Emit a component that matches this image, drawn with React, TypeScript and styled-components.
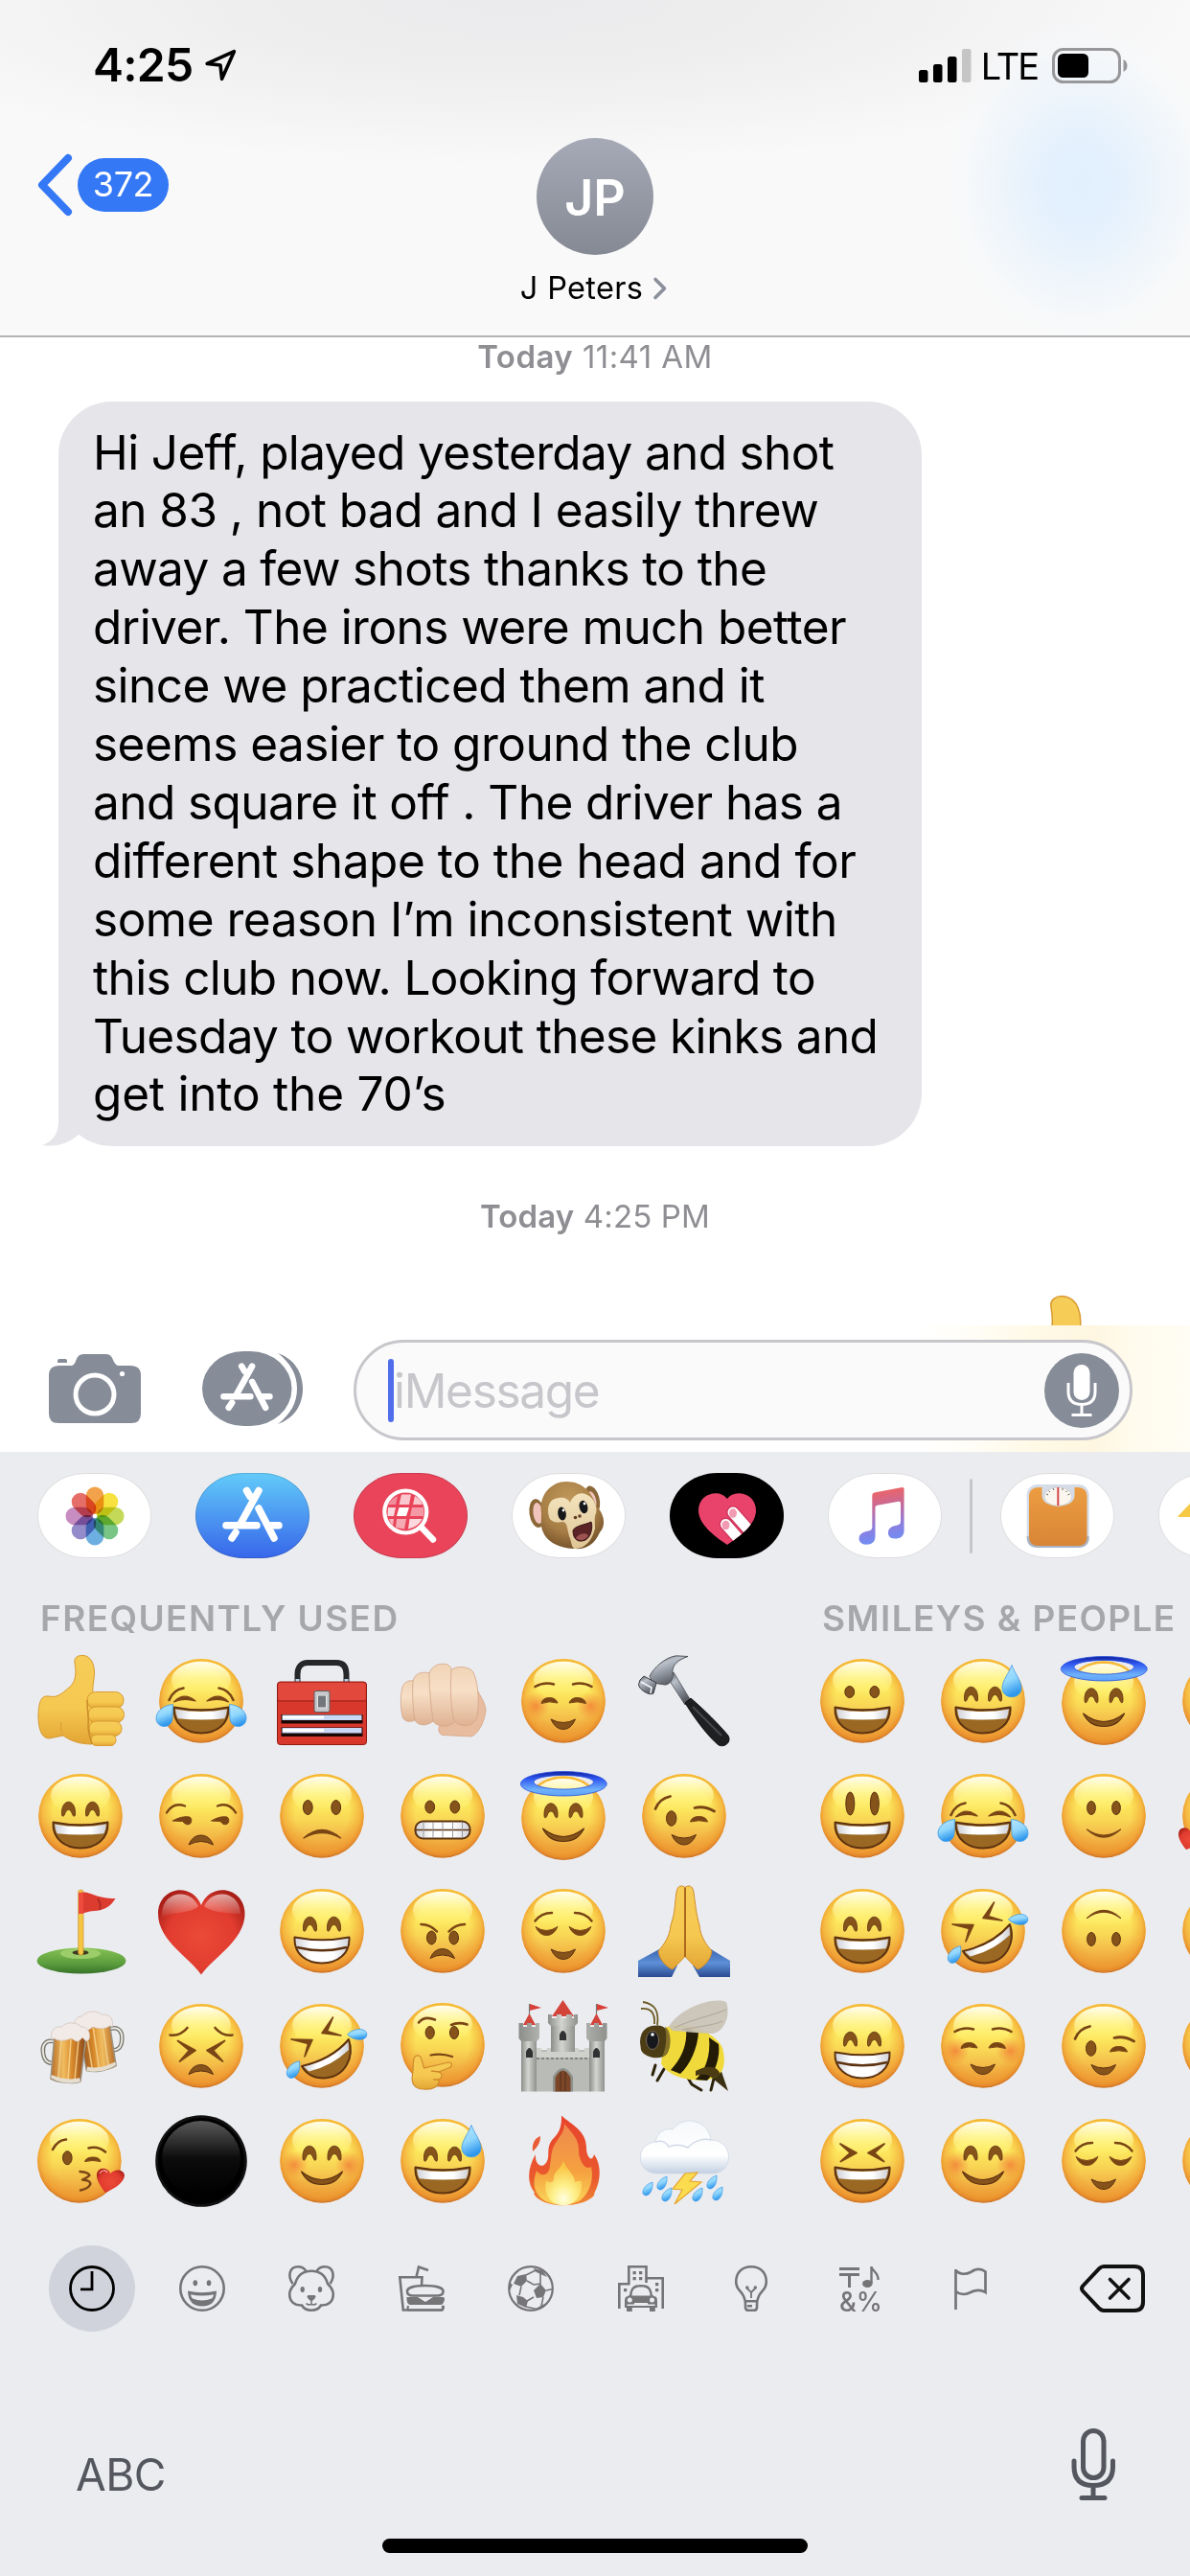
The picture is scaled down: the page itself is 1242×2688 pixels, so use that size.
import React from 'react';
import styled, { createGlobalStyle } from 'styled-components';

const GlobalStyle = createGlobalStyle`
  * { box-sizing: border-box; }
  body {
    margin: 0;
    background: #fff;
    font-family: Inter, "Liberation Sans", sans-serif;
    color: #000;
  }
  svg { display: block; flex-shrink: 0; overflow: visible; }
`;

const Screen = styled.div`
  width: 1242px;
  height: 2688px;
  display: flex;
  flex-direction: column;
  overflow: hidden;
`;

/* ---------- header ---------- */

const Header = styled.header`
  height: 352px;
  flex-shrink: 0;
  display: flex;
  flex-direction: column;
  border-bottom: 2px solid #b4b4b6;
  background:
    radial-gradient(ellipse 150px 175px at 1128px 192px, #e1effd 0%, #e5f1fd 30%, rgba(236, 244, 251, 0.75) 60%, rgba(246, 249, 252, 0.3) 85%, rgba(249, 249, 249, 0) 100%),
    radial-gradient(ellipse 720px 175px at 540px 0, #ebebed 0%, #ededee 35%, #f4f4f5 75%, rgba(249, 249, 249, 0) 100%),
    #f9f9f9;
`;

const StatusBar = styled.div`
  height: 136px;
  padding: 0 65px 0 97px;
  display: flex;
  align-items: center;
  justify-content: space-between;
`;

const StatusGroup = styled.div<{ $gap: number }>`
  display: flex;
  align-items: center;
  gap: ${({ $gap }) => $gap}px;
`;

const Time = styled.span`
  font-size: 48px;
  font-weight: 600;
  letter-spacing: -0.7px;
  line-height: 60px;
`;

const Carrier = styled.span`
  margin-left: -5px;
  padding-top: 2px;
  font-size: 38px;
  letter-spacing: -2px;
  line-height: 60px;
`;

const NavRow = styled.div`
  flex: 1;
  display: grid;
  grid-template-columns: 1fr auto 1fr;
  padding: 8px 39px 0;
`;

const BackButton = styled.div`
  display: flex;
  align-items: center;
  gap: 6px;
  height: 64px;
  margin-top: 17px;
`;

const UnreadBadge = styled.span`
  width: 95px;
  height: 56px;
  border-radius: 28px;
  background: #3478f6;
  color: #fff;
  font-size: 36px;
  line-height: 55px;
  letter-spacing: -0.4px;
  text-align: center;
`;

const Contact = styled.div`
  display: flex;
  flex-direction: column;
  align-items: center;
`;

const Avatar = styled.div`
  width: 122px;
  height: 122px;
  border-radius: 50%;
  background: linear-gradient(#a6aab7, #858993);
  color: #fff;
  font-size: 52px;
  font-weight: 600;
  line-height: 126px;
  text-align: center;
`;

const ContactName = styled.div`
  display: flex;
  align-items: center;
  gap: 10px;
  margin: 14px 0 0 -2px;
  font-size: 32.5px;
  line-height: 42px;
  letter-spacing: 0.3px;
`;

/* ---------- conversation ---------- */

const Conversation = styled.main`
  height: 1031px;
  flex-shrink: 0;
  overflow: hidden;
  display: flex;
  flex-direction: column;
  background: #fff;
`;

const Timestamp = styled.div<{ $top: number; $spacing: number }>`
  flex-shrink: 0;
  margin-top: ${({ $top }) => $top}px;
  color: #8e8e93;
  font-size: 33px;
  line-height: 38px;
  letter-spacing: ${({ $spacing }) => $spacing}px;
  text-align: center;

  b { font-weight: 600; }
`;

const Bubble = styled.div`
  position: relative;
  flex-shrink: 0;
  width: 901px;
  height: 777px;
  margin: 28px 0 0 61px;
  padding: 22.5px 0 0 36px;
  border-radius: 56px;
  background: #e5e5ea;
`;

const BubbleTail = styled.svg`
  position: absolute;
  left: -17px;
  bottom: 0;
`;

const Line = styled.div<{ $spacing: number }>`
  font-size: 49.5px;
  line-height: 60.9px;
  letter-spacing: ${({ $spacing }) => $spacing}px;
  white-space: pre;
`;

const BigEmoji = styled.div`
  flex-shrink: 0;
  align-self: flex-end;
  margin: 64px 64px 0 0;
`;

/* ---------- message field ---------- */

const Composer = styled.div`
  height: 132px;
  flex-shrink: 0;
  display: flex;
  align-items: center;
  padding: 0 60px 0 51px;
  background: linear-gradient(90deg, #fff 77%, #fffdf5 82%, #fff9e6 87%, #fef6e0 92%, #fffbed 95%, #fffdf4 100%);
`;

const ComposerIcon = styled.div<{ $right: number }>`
  margin-right: ${({ $right }) => $right}px;
`;

const Field = styled.div`
  flex: 1;
  height: 105px;
  margin-top: 3px;
  display: flex;
  align-items: center;
  padding: 0 11px 0 33px;
  border: 3px solid #c6c6cb;
  border-radius: 53px;
  background: #fafafa;
`;

const Caret = styled.span`
  width: 6px;
  height: 66px;
  border-radius: 3px;
  background: #506eec;
`;

const Placeholder = styled.span`
  flex: 1;
  color: #c6c6cb;
  font-size: 49.5px;
  letter-spacing: -1.3px;
`;

/* ---------- keyboard ---------- */

const Keyboard = styled.section`
  flex: 1;
  display: flex;
  flex-direction: column;
  overflow: hidden;
  background: #ebecf0;
`;

const AppStrip = styled.div`
  display: flex;
  align-items: center;
  padding: 22px 0 41px 39px;
`;

const AppPill = styled.div<{ $bg?: string }>`
  width: 119px;
  height: 89px;
  flex-shrink: 0;
  margin-right: 46px;
  border-radius: 50px / 44.5px;
  background: ${({ $bg }) => $bg || '#fff'};
  box-shadow: inset 0 0 0 1px rgba(0, 0, 0, 0.13);
`;

const StripDivider = styled.span`
  flex-shrink: 0;
  width: 3px;
  height: 78px;
  margin: 0 29px 0 -17px;
  border-radius: 2px;
  background: #c5c5ca;
`;

const EmojiPages = styled.div`
  display: flex;
  gap: 90px;
  padding-left: 36px;
`;

const SectionTitle = styled.h2`
  margin: 0 0 16px 6px;
  color: #a6a7ab;
  font-size: 37px;
  font-weight: 600;
  line-height: 44px;
  letter-spacing: 1.4px;
  white-space: nowrap;
`;

const EmojiGrid = styled.div<{ $columns: number }>`
  display: grid;
  grid-template-columns: repeat(${({ $columns }) => $columns}, 96px);
  grid-auto-rows: 96px;
  gap: 24px 30px;
`;

const CategoryBar = styled.nav`
  display: flex;
  align-items: center;
  justify-content: space-between;
  margin-top: 40px;
  padding: 0 47px 0 51px;
`;

const Categories = styled.div`
  display: flex;
  gap: 24.6px;
`;

const Category = styled.div<{ $active?: boolean }>`
  width: 90px;
  height: 90px;
  display: flex;
  align-items: center;
  justify-content: center;
  border-radius: 50%;
  color: ${({ $active }) => ($active ? '#000' : '#757577')};
  background: ${({ $active }) => ($active ? '#d0d3dc' : 'transparent')};
`;

const BottomRow = styled.div`
  display: flex;
  align-items: flex-end;
  justify-content: space-between;
  height: 75px;
  margin-top: 102px;
  padding: 0 77px 0 79px;
`;

const AbcKey = styled.span`
  color: #55575f;
  font-size: 46px;
  line-height: 56px;
  letter-spacing: -0.5px;
`;

const HomeIndicator = styled.div`
  width: 444px;
  height: 15px;
  margin: 39px auto 0;
  border-radius: 8px;
  background: #000;
`;

/* ---------- shared gradients ---------- */

const Gradients = () => (
  <svg width="0" height="0" aria-hidden="true">
    <defs>
      <linearGradient id="faceBase" x1="0" y1="0" x2="0" y2="1">
        <stop offset="0" stopColor="#ffe23c" />
        <stop offset="0.35" stopColor="#fdea5e" />
        <stop offset="0.55" stopColor="#f9d755" />
        <stop offset="0.8" stopColor="#f1b043" />
        <stop offset="1" stopColor="#e79230" />
      </linearGradient>
      <radialGradient id="faceEdge" cx="0.5" cy="0.47" r="0.53">
        <stop offset="0.6" stopColor="#f0a030" stopOpacity="0" />
        <stop offset="0.86" stopColor="#f0992e" stopOpacity="0.55" />
        <stop offset="0.95" stopColor="#e78a2a" stopOpacity="0.85" />
        <stop offset="1" stopColor="#c46c24" stopOpacity="0.95" />
      </radialGradient>
      <linearGradient id="faceShine" x1="0" y1="0" x2="0" y2="1">
        <stop offset="0" stopColor="#fffef0" />
        <stop offset="0.35" stopColor="#fffcb8" stopOpacity="0.8" />
        <stop offset="1" stopColor="#fff36e" stopOpacity="0" />
      </linearGradient>
      <radialGradient id="blush">
        <stop offset="0" stopColor="#f0662f" stopOpacity="0.65" />
        <stop offset="1" stopColor="#f0762f" stopOpacity="0" />
      </radialGradient>
      <linearGradient id="tear" x1="0" y1="0" x2="0.3" y2="1">
        <stop offset="0" stopColor="#b9e6fd" />
        <stop offset="0.55" stopColor="#8fd6fd" />
        <stop offset="1" stopColor="#2f97ec" />
      </linearGradient>
      <linearGradient id="teeth" x1="0" y1="0" x2="1" y2="0">
        <stop offset="0" stopColor="#cfd1d8" />
        <stop offset="0.3" stopColor="#fff" />
        <stop offset="0.7" stopColor="#fff" />
        <stop offset="1" stopColor="#cfd1d8" />
      </linearGradient>
      <linearGradient id="halo" x1="0" y1="0" x2="0" y2="1">
        <stop offset="0" stopColor="#101f9c" />
        <stop offset="0.3" stopColor="#2f58f2" />
        <stop offset="0.75" stopColor="#6fb2fb" />
        <stop offset="1" stopColor="#5fa0f8" />
      </linearGradient>
      <radialGradient id="heartRed" cx="0.5" cy="0.55" r="0.6">
        <stop offset="0" stopColor="#ec4a38" />
        <stop offset="0.65" stopColor="#e13c2f" />
        <stop offset="1" stopColor="#a91f18" />
      </radialGradient>
      <linearGradient id="shineWhite" x1="0" y1="0" x2="0" y2="1">
        <stop offset="0" stopColor="#fff" stopOpacity="0.75" />
        <stop offset="1" stopColor="#fff" stopOpacity="0" />
      </linearGradient>
      <linearGradient id="skin" x1="0" y1="0" x2="0" y2="1">
        <stop offset="0" stopColor="#f6cd58" />
        <stop offset="0.6" stopColor="#f5c850" />
        <stop offset="1" stopColor="#e3a534" />
      </linearGradient>
      <linearGradient id="paleSkin" x1="0" y1="0" x2="0" y2="1">
        <stop offset="0" stopColor="#f0d4b6" />
        <stop offset="0.4" stopColor="#f7dfc6" />
        <stop offset="1" stopColor="#dfb293" />
      </linearGradient>
      <linearGradient id="steel" x1="0" y1="0" x2="0.5" y2="1">
        <stop offset="0" stopColor="#4a4d53" />
        <stop offset="0.35" stopColor="#b9c0c9" />
        <stop offset="0.6" stopColor="#9299a3" />
        <stop offset="1" stopColor="#565a61" />
      </linearGradient>
      <linearGradient id="grass" x1="0" y1="0" x2="0" y2="1">
        <stop offset="0" stopColor="#86c254" />
        <stop offset="0.6" stopColor="#5c9e3d" />
        <stop offset="1" stopColor="#37732a" />
      </linearGradient>
      <linearGradient id="beer" x1="0" y1="0" x2="1" y2="0">
        <stop offset="0" stopColor="#b56a26" />
        <stop offset="0.35" stopColor="#f0bd60" />
        <stop offset="0.6" stopColor="#d98a2b" />
        <stop offset="1" stopColor="#87451a" />
      </linearGradient>
      <linearGradient id="stone" x1="0" y1="0" x2="1" y2="0">
        <stop offset="0" stopColor="#8b8d89" />
        <stop offset="0.45" stopColor="#d3d5d0" />
        <stop offset="1" stopColor="#8f918d" />
      </linearGradient>
      <linearGradient id="blackBall" x1="0" y1="0" x2="0" y2="1">
        <stop offset="0" stopColor="#5a5a5a" />
        <stop offset="0.5" stopColor="#0c0c0c" />
        <stop offset="1" stopColor="#000" />
      </linearGradient>
      <linearGradient id="flameOuter" x1="0" y1="0" x2="0" y2="1">
        <stop offset="0" stopColor="#e8432c" />
        <stop offset="0.7" stopColor="#ea5a2e" />
        <stop offset="1" stopColor="#f08a33" />
      </linearGradient>
      <linearGradient id="flameMid" x1="0" y1="0" x2="0" y2="1">
        <stop offset="0" stopColor="#ef8a4e" />
        <stop offset="0.6" stopColor="#f5a13f" />
        <stop offset="1" stopColor="#fbd75a" />
      </linearGradient>
      <radialGradient id="flameCore" cx="0.5" cy="0.85" r="0.7">
        <stop offset="0" stopColor="#fffde0" />
        <stop offset="0.45" stopColor="#fdf08a" />
        <stop offset="1" stopColor="#f9c748" />
      </radialGradient>
      <linearGradient id="cloud" x1="0" y1="0" x2="0" y2="1">
        <stop offset="0" stopColor="#f6f8fb" />
        <stop offset="0.65" stopColor="#fff" />
        <stop offset="1" stopColor="#c3d0e2" />
      </linearGradient>
      <linearGradient id="sleeve" x1="0" y1="0" x2="0" y2="1">
        <stop offset="0" stopColor="#3c66b4" />
        <stop offset="0.5" stopColor="#5d8fd6" />
        <stop offset="1" stopColor="#2a4a92" />
      </linearGradient>
      <linearGradient id="music" gradientUnits="userSpaceOnUse" x1="52" y1="16" x2="62" y2="74">
        <stop offset="0" stopColor="#f1635f" />
        <stop offset="0.35" stopColor="#c46b9c" />
        <stop offset="0.7" stopColor="#8a80e0" />
        <stop offset="1" stopColor="#6d8ff8" />
      </linearGradient>
      <linearGradient id="scaleBody" x1="0" y1="0" x2="0" y2="1">
        <stop offset="0" stopColor="#ec9d41" />
        <stop offset="1" stopColor="#d98536" />
      </linearGradient>
      <radialGradient id="monkeyFur" cx="0.45" cy="0.3" r="0.75">
        <stop offset="0" stopColor="#c39a5d" />
        <stop offset="0.6" stopColor="#a67d44" />
        <stop offset="1" stopColor="#6e4d28" />
      </radialGradient>
      <linearGradient id="monkeySkin" x1="0" y1="0" x2="0" y2="1">
        <stop offset="0" stopColor="#f3e3bd" />
        <stop offset="1" stopColor="#dfc696" />
      </linearGradient>
    </defs>
  </svg>
);

/* ---------- emoji parts ---------- */

const BROWN = '#7a4515';
const DARK = '#5d3210';

const Face = ({ children, x = 48, y = 47.7 }: { children?: React.ReactNode; x?: number; y?: number }) => (
  <>
    <circle cx={x} cy={y} r="43.8" fill="url(#faceBase)" />
    <circle cx={x} cy={y} r="43.8" fill="url(#faceEdge)" />
    <ellipse cx={x} cy={y - 21.5} rx="31" ry="19.5" fill="url(#faceShine)" />
    {children}
  </>
);

const Dots = ({ x1 = 34.7, x2 = 60.8, y = 38.5, rx = 4.9, ry = 6.5 }) => (
  <g fill="#86531a" stroke={DARK} strokeWidth="1">
    <ellipse cx={x1} cy={y} rx={rx} ry={ry} />
    <ellipse cx={x2} cy={y} rx={rx} ry={ry} />
  </g>
);

const arch = (x: number, y: number) =>
  `M${x} ${y + 13} C${x - 1} ${y - 4} ${x + 15} ${y - 4} ${x + 14} ${y + 13} C${x + 14} ${y + 16} ${x + 12} ${y + 16} ${x + 11} ${y + 13} C${x + 9} ${y + 7} ${x + 5} ${y + 7} ${x + 3} ${y + 13} C${x + 2} ${y + 16} ${x} ${y + 16} ${x} ${y + 13}Z`;

const Arches = ({ y = 33, x1 = 28.5, x2 = 53.5 }) => (
  <path d={arch(x1, y) + arch(x2, y)} fill="#86531a" stroke={DARK} strokeWidth="0.8" />
);

const OpenMouth = ({ beam = false }) => (
  <>
    <path
      d="M19.5 54.5 Q48 60 76.5 54.5 C77.5 72 64 81.5 48 81.5 C32 81.5 18.5 72 19.5 54.5Z"
      fill={beam ? 'url(#teeth)' : '#9a6822'}
      stroke={DARK}
      strokeWidth="2"
      strokeLinejoin="round"
    />
    {beam ? (
      <path d="M22 65 Q48 71.5 74 65" fill="none" stroke={DARK} strokeWidth="2.6" />
    ) : (
      <path d="M21 56.5 Q48 61.5 75 56.5 Q74.5 62 72.5 66.2 Q48 69 23.5 66.2 Q21.5 62 21 56.5Z" fill="url(#teeth)" />
    )}
  </>
);

const Stroke = ({ d, w = 2.8 }: { d: string; w?: number }) => (
  <path d={d} fill="none" stroke={BROWN} strokeWidth={w} strokeLinecap="round" strokeLinejoin="round" />
);

const Cheeks = ({ y = 52 }) => (
  <>
    <circle cx="19.5" cy={y} r="14.5" fill="url(#blush)" />
    <circle cx="76" cy={y} r="14.5" fill="url(#blush)" />
  </>
);

const SmallSmile = ({ y = 67 }) => (
  <path d={`M35 ${y} Q48 ${y + 7} 60.5 ${y} Q56 ${y + 10.5} 48 ${y + 10.5} Q39.5 ${y + 10.5} 35 ${y}Z`} fill="#86531a" stroke={DARK} strokeWidth="1" strokeLinejoin="round" />
);

const WideSmile = ({ y = 59 }) => (
  <path d={`M26.5 ${y} Q48 ${y + 17} 69.5 ${y} Q63 ${y + 13.5} 48 ${y + 13.5} Q33 ${y + 13.5} 26.5 ${y}Z`} fill="#86531a" stroke={DARK} strokeWidth="1.2" strokeLinejoin="round" />
);

const Frown = ({ y = 67 }) => (
  <path d={`M35 ${y + 10} Q39 ${y} 47.7 ${y} Q56.5 ${y} 60.5 ${y + 10} Q47.7 ${y + 3} 35 ${y + 10}Z`} fill="#86531a" stroke={DARK} strokeWidth="1" strokeLinejoin="round" />
);

const CheekTears = () => (
  <>
    <path d="M18.5 51.5 C10 52 1 58 1 66 C1 77 18 78 18 65Z" fill="url(#tear)" stroke="#3a9bea" strokeWidth="0.8" />
    <path d="M77.5 51.5 C86 52 95 58 95 66 C95 77 78 78 78 65Z" fill="url(#tear)" stroke="#3a9bea" strokeWidth="0.8" />
  </>
);

const Joy = () => (
  <Face>
    <Stroke d="M14.5 47 Q19 36 29.5 34.5 M81.5 47 Q77 36 66.5 34.5" w={2.6} />
    <path d="M19.5 49 Q30 38 42 48 Q30 44.5 19.5 49Z M54 48 Q66 38 76.5 49 Q66 44.5 54 48Z" fill={BROWN} stroke={BROWN} strokeWidth="1.2" strokeLinejoin="round" />
    <OpenMouth />
    <CheekTears />
  </Face>
);

const Sweat = () => (
  <Face>
    <Arches />
    <OpenMouth />
    <path d="M78 10.5 C81 19 88 27 88 34 C88 47 68 47 68 34 C68 27 75 19 78 10.5Z" fill="url(#tear)" stroke="#3d9be8" strokeWidth="0.8" />
  </Face>
);

const Rofl = () => (
  <Face>
    <path d="M16 41 L38 41.5 L30 59 L33.5 45.5Z M59.5 18 L48 34.5 L68 37 L53.5 32.5Z" fill={BROWN} stroke={BROWN} strokeWidth="1.6" strokeLinejoin="round" />
    <path d="M27 69 Q58 62 76 41 C82 59 73 80 50 81.5 C38 81.5 31 76 27 69Z" fill="#9a6822" stroke={DARK} strokeWidth="2" strokeLinejoin="round" />
    <path d="M29 69.5 Q58 63 75.5 43.5 L76 52 Q58 69 34.5 74.5Z" fill="url(#teeth)" />
    <path d="M74.5 36 C80 29.5 94.5 28 94.8 36 C94.5 43 82 43 74.5 36Z" fill="url(#tear)" stroke="#3a9bea" strokeWidth="0.8" />
    <path d="M24.5 63.8 C17 65 11 71 11.3 77 C12.5 85.5 27 82 24.5 63.8Z" fill="url(#tear)" stroke="#3a9bea" strokeWidth="0.8" />
  </Face>
);

const Innocent = () => (
  <Face y={50}>
    <Arches y={34.5} x1={28} x2={54} />
    <WideSmile y={61} />
    <path
      fillRule="evenodd"
      d="M3.3 14.5 A45 13 0 0 1 93.3 14.5 A45 12.5 0 0 1 3.3 14.5Z M17 12.5 A31 7.5 0 0 0 79.5 12.5 A31 7 0 0 0 17 12.5Z"
      fill="url(#halo)"
      stroke="#2450dd"
      strokeWidth="0.8"
    />
  </Face>
);

const Wink = () => (
  <Face>
    <Stroke d="M18 40.5 Q22 30 33.5 27.5 M59 39.5 Q69 37 79.5 43" w={2.8} />
    <ellipse cx="34.7" cy="50.5" rx="5.2" ry="7.8" fill="#86531a" stroke={DARK} />
    <path d="M54.5 54 Q56 48.5 63.5 48.5 Q71 48.5 72.5 54 Q63.5 51.5 54.5 54Z" fill={BROWN} stroke={BROWN} strokeLinejoin="round" />
    <SmallSmile y={67.5} />
  </Face>
);

const Relieved = () => (
  <Face>
    <Stroke d="M18.5 37.5 Q25 29 36 29 M77.5 37.5 Q71 29 60 29" w={2.5} />
    <path d="M19 43.5 Q30 51.5 42 43.5 Q38 52.5 30.5 52.5 Q23 52.5 19 43.5Z M54 43.5 Q65.5 51.5 77 43.5 Q73 52.5 65.5 52.5 Q58 52.5 54 43.5Z" fill={BROWN} stroke={BROWN} strokeLinejoin="round" />
    <SmallSmile />
  </Face>
);

const Relaxed = () => (
  <Face>
    <Cheeks y={53} />
    <Stroke d="M18.5 33 Q28 27.5 38 30.5 M77.5 33 Q68 27.5 58 30.5" w={2.5} />
    <path d="M25 50.5 Q26 44.5 33.5 44.5 Q40 44.5 42 50 Q33 47.5 25 50.5Z M54 50 Q56 44.5 62.5 44.5 Q70 44.5 71.5 50.5 Q63 47.5 54 50Z" fill={BROWN} stroke={BROWN} strokeLinejoin="round" />
    <SmallSmile />
  </Face>
);

const Blush = () => (
  <Face>
    <Cheeks />
    <Arches y={32} x1={28} x2={54} />
    <WideSmile y={59} />
  </Face>
);

const Grin = () => (
  <Face>
    <Arches />
    <OpenMouth />
  </Face>
);

const Beam = () => (
  <Face>
    <Arches />
    <OpenMouth beam />
  </Face>
);

const ThumbsUp = () => (
  <g stroke="#d99a31" strokeWidth="1">
    <path
      d="M14 43 C6 42 4 52 4 64 C4 78 8 87 15 87 L30 84 C38 90 48 93 60 93 L66 50 C60 45 60 38 62 25 C64 12 60 2 52 .6 C45 -.4 41 3 42 8 C44 20 43 28 36 34 C31 38 26 43 20 43.5Z"
      fill="url(#skin)"
    />
    <rect x="55" y="38.5" width="38" height="17.5" rx="8.5" fill="url(#skin)" />
    <rect x="56" y="54" width="37.5" height="16.5" rx="8" fill="url(#skin)" />
    <rect x="57" y="69" width="34" height="15.5" rx="7.5" fill="url(#skin)" />
    <rect x="59" y="83" width="26" height="11.5" rx="5.5" fill="url(#skin)" />
    <path d="M55 47 C55 60 57 66 56 74 C56 84 60 90 60 93" fill="none" stroke="#c98a28" strokeWidth="1.4" />
    <path d="M30 84 C27 78 27 76 28 70" fill="none" stroke="#dfa63a" strokeWidth="1.6" />
  </g>
);

const Toolbox = () => (
  <>
    <path d="M22.5 28 V20 C22.5 12 27 8 33 8 H63 C70 8 73.5 12 73.5 20 V28" fill="none" stroke="#262729" strokeWidth="6" />
    <path d="M22.5 28 V25 M73.5 28 V25" stroke="#b8d4e6" strokeWidth="4" />
    <rect x="1.5" y="28" width="93" height="65.5" rx="3" fill="#d8372b" stroke="#8f1b14" strokeWidth="1" />
    <rect x="2.5" y="29" width="91" height="18" rx="2" fill="#e2483c" />
    <path d="M2 48 H94" stroke="#9c2018" strokeWidth="1.2" />
    <rect x="5.5" y="62" width="85" height="9.5" fill="#1a0705" />
    <rect x="5.5" y="75.5" width="85" height="9.5" fill="#1a0705" />
    <rect x="6.5" y="62.5" width="83" height="5.5" fill="#c9d8f4" />
    <rect x="6.5" y="76" width="83" height="5.5" fill="#c9d8f4" />
    <path d="M7 65 H50 M7 78.5 H50" stroke="#fff" strokeWidth="3" />
    <rect x="40" y="37.5" width="16" height="22" rx="2" fill="#c3c5c8" stroke="#5d5f63" />
    <rect x="43.5" y="42" width="9" height="13" fill="#72757a" stroke="#e3e4e6" />
  </>
);

const Fist = () => (
  <g stroke="#d3a588" strokeWidth="0.8">
    <path d="M45 74 C50 70 84 68 82 30 C84 40 93 48 93 58 C92 68 86 82 78 85 L48 83.5 C43 82 43 76 45 74Z" fill="#e8bd9f" />
    <path d="M5 38 C6 28 12 26 18 27 L22 66 C14 72 7 69 6 64 C4 56 4 46 5 38Z" fill="url(#paleSkin)" />
    <path d="M17 28 C18 18 28 17 36 19 L39 68 C32 75 22 74 19 68 C17 56 16 40 17 28Z" fill="url(#paleSkin)" />
    <path d="M34 20 C36 8 54 6 57 14 L61 68 C58 76 42 76 38 69 C36 54 34 36 34 20Z" fill="url(#paleSkin)" />
    <path d="M57 16 C60 11 76 11 80 18 C86 30 86 54 84 64 C82 75 66 76 60 69 C56 54 56 30 57 16Z" fill="url(#paleSkin)" />
  </g>
);

const Hammer = () => (
  <>
    <path d="M31 24 L37 18 L54 46 L49 52Z" fill="url(#steel)" stroke="#4a4c52" strokeWidth="0.8" />
    <path d="M49 50 L55 45 C70 58 84 72 94 84 C98 91 90 97 84 94 C74 86 60 68 49 50Z" fill="#1e1f21" stroke="#000" strokeWidth="0.8" />
    <path d="M57 54 L87 84" stroke="#45484c" strokeWidth="2" />
    <path d="M12 22 C16 14 28 2 40 .8 L52 1.5 C42 5 35 10 36 19 C37 25 33 31 28 31 L15 29Z" fill="url(#steel)" stroke="#4a4c52" strokeWidth="0.9" />
    <path d="M2 26 L6 22 L19 29 L16 40 C12 43 1 36 .5 31Z" fill="url(#steel)" stroke="#3c3e43" strokeWidth="1" />
    <path d="M3 28 L14 34 L13 40" fill="none" stroke="#f2f5f8" strokeWidth="1.6" />
  </>
);

const Unamused = () => (
  <Face>
    <Stroke d="M12 44.5 Q19 33 31 37.5 M84 44.5 Q77 33 65 37.5" w={2.4} />
    <path d="M18 53 Q28 47.5 36 49 Q39 51 37 55.5 Q33 59 28.5 53.5Z M58.5 53 Q68 47.5 75 49 Q78 51 76 55.5 Q72 59 68 53.5Z" fill={BROWN} stroke={BROWN} strokeLinejoin="round" />
    <Frown y={68} />
  </Face>
);

const SlightFrown = () => (
  <Face>
    <Dots x1={33.3} x2={62.7} y={39} ry={7.5} />
    <path d="M29 71 Q48 54 67.5 71 Q48 60 29 71Z" fill={BROWN} stroke={BROWN} strokeWidth="1.4" strokeLinejoin="round" />
  </Face>
);

const Grimace = () => (
  <Face>
    <Dots />
    <rect x="19.5" y="53.5" width="57" height="18" rx="8" fill="url(#teeth)" stroke={DARK} strokeWidth="2" />
    <path d="M20 62.5 H76" stroke={DARK} strokeWidth="1.3" />
    <path d="M28 54 V71 M38 54 V71 M48 54 V71 M58.5 54 V71 M68.5 54 V71" stroke="#8c8c92" strokeWidth="0.9" />
  </Face>
);

const Golf = () => (
  <>
    <ellipse cx="49" cy="79" rx="46.5" ry="13.5" fill="url(#grass)" />
    <ellipse cx="48" cy="71.5" rx="21" ry="5.5" fill="#9ccd68" />
    <ellipse cx="48" cy="70.5" rx="8.5" ry="2.6" fill="#3c3a22" />
    <rect x="45.7" y="5" width="5.3" height="68" rx="2.5" fill="#f5c544" stroke="#c9932a" strokeWidth="0.7" />
    <path d="M46 8 C58 5 62 14 84.5 14 C80 22 72 27 62 27 C56 27 52 30 46 30Z" fill="#dc3b30" />
    <path d="M46 8 H51 V30 H46Z" fill="#ee4b3d" />
    <path d="M66 14 Q70 20 68 26" stroke="#a72820" strokeWidth="1.5" fill="none" />
  </>
);

const Heart = () => (
  <>
    <path d="M48 93.5 C36 76 3 58 3 30 C3 2 38 -4 48 21 C58 -4 93.5 2 93.5 30 C93.5 58 60 76 48 93.5Z" fill="url(#heartRed)" />
    <path d="M7 30 C8 6 36 3 45 22 C38 30 14 28 7 34Z M51 22 C60 3 88 6 89 30 C88 30 60 30 51 22Z" fill="url(#shineWhite)" opacity="0.8" />
  </>
);

const Angry = () => (
  <Face>
    <Stroke d="M25.5 41 Q35 41 42 48.5 M71 41 Q61.5 41 54.5 48.5" w={2.5} />
    <Dots x1={36.3} x2={59.7} y={55} ry={7} rx={4.8} />
    <Frown y={66.5} />
  </Face>
);

const Pray = () => (
  <>
    <path d="M0 79 L22 67 L41 84 L35 96 H0Z M96 79 L76 67 L57 84 L64 96 H96Z" fill="url(#sleeve)" />
    <g fill="url(#skin)" stroke="#d08a28" strokeWidth="1">
      <path d="M48.500 2 C43 -1 40.5 3 40 8 C38 20 39 28 34 42 C33 54 27 62 21 69 C22 78 30 86 36 88 L48.5 75Z" />
      <path d="M49.500 2 C55 -1 57.5 3 58 8 C60 20 60 28 64 42 C65 54 71 62 77 69 C76 78 68 86 62 88 L49.5 75Z" />
    </g>
    <path d="M49 3 V75" stroke="#a8651b" strokeWidth="1.8" />
  </>
);

const Mug = () => (
  <>
    <path d="M12 20 C2 18 0 26 1 32 C2 42 8 44 14 42" fill="none" stroke="#77746a" strokeWidth="4.5" />
    <path d="M12 20 C2 18 0 26 1 32 C2 42 8 44 14 42" fill="none" stroke="#e9e8e2" strokeWidth="2" />
    <path d="M13 12 L46 14 L40 62 C32 65 16 63 9 59Z" fill="url(#beer)" stroke="#9b9382" strokeWidth="1.5" />
    <path d="M20 17 L17 58 M30 18 L27 60 M38 18 L34 60" stroke="#f7d692" strokeWidth="1.6" opacity="0.8" />
    <path d="M9 58 C18 64 32 65 40 62 L39 58 C30 61 18 59 10 55Z" fill="#e5ddce" />
    <path d="M10 18 C8 10 12 4 20 5 C26 -1 36 0 41 5 C48 5 51 12 49 18 C46 22 44 18 42 16 C36 24 34 18 30 17 C24 20 16 20 13 17Z" fill="#f2eae6" stroke="#d3c5be" strokeWidth="0.8" />
  </>
);

const Beers = () => (
  <>
    <g transform="translate(90 9) rotate(-4) scale(-1 1)">
      <Mug />
    </g>
    <g transform="translate(8 23)">
      <Mug />
    </g>
  </>
);

const Persevere = () => (
  <Face>
    <Stroke d="M15.5 36.5 Q26 38 33.5 29 M80.5 36.5 Q70 38 62.5 29" w={2.6} />
    <path d="M23.5 42.5 L42 52.5 L25.5 64 L35.5 52.5Z M72.5 42.5 L54 52.5 L70.5 64 L60.5 52.5Z" fill={BROWN} stroke={BROWN} strokeWidth="1.8" strokeLinejoin="round" />
    <Frown y={67.5} />
  </Face>
);

const Thinking = () => (
  <Face y={46.7}>
    <Dots x1={34.7} x2={60} y={34} rx={4.6} ry={6.5} />
    <Stroke d="M23 23.5 Q29 16 40 20.5 M57 26 Q64 22.5 73.5 25.5" w={2.6} />
    <Stroke d="M35.5 57.5 Q47 55 58 59" w={2.2} />
    <path
      d="M19 59 C23 56 26 59 26.5 64 L28.5 71 L54 65 C59 65 58 70 54 71 L44 75 C49 77 47 82 44 83 C45 90 38 94 28 93 C18 93 15 86 16.5 78 C18 70 16 64 19 59Z"
      fill="url(#skin)"
      stroke="#ce8a2b"
      strokeWidth="1.2"
    />
    <path d="M36 74 L45 75 M38 83 H44" stroke="#ce8a2b" strokeWidth="1.5" />
  </Face>
);

const Castle = () => (
  <>
    <path d="M12.5 4 V18 M82.5 4 V18" stroke="#777" strokeWidth="1.2" />
    <path d="M13 4 L25 8 L13 11Z M83 4 L95 8 L83 11Z" fill="#d94038" />
    <path d="M6 26 L12.5 14 L19 26Z M76 26 L82.5 14 L89 26Z M36 17 L47.5 0 L59 17Z" fill="#d3453b" />
    <path d="M20 52 H76 V95.5 H20Z" fill="#b9bbb6" />
    <path d="M20 50 H25 V54 H31 V50 H36 V54 H59 V50 H64 V54 H70 V50 H76 V60 H20Z" fill="#cfd1cc" />
    <path d="M20 61 H76" stroke="#83857f" strokeWidth="2" strokeDasharray="3 2" />
    <rect x="35" y="22" width="25" height="32" fill="url(#stone)" />
    <path d="M32 15 H36 V19 H41 V15 H46 V19 H51 V15 H57 V19 H59 V15 H63 V24 L60 27 H35 L32 24Z" fill="url(#stone)" />
    <rect x="4" y="40" width="16" height="55.5" fill="url(#stone)" />
    <rect x="75" y="40" width="16" height="55.5" fill="url(#stone)" />
    <path d="M1.5 24 H6 V28 H10 V24 H15 V28 H19 V24 H23 V40 L20 43 H4 L1.5 40Z M72 24 H76 V28 H80 V24 H85 V28 H89 V24 H93.5 V40 L91 43 H75 L72 40Z" fill="url(#stone)" />
    <path d="M9 60 V54 Q12.5 46 16 54 V60Z M79 60 V54 Q82.5 46 86 54 V60Z M44 42 V36 Q47.5 28 51 36 V42Z" fill="#2f3133" />
    <path d="M37 95.5 V80 Q47.5 62 58 80 V95.5Z" fill="#8e908b" />
    <path d="M39.5 95.5 V81 Q47.5 66 55.5 81 V95.5Z" fill="#7b4728" />
    <path d="M45 75 V95 M50 75 V95" stroke="#55301a" strokeWidth="1" />
  </>
);

const Bee = () => (
  <>
    <path d="M20 26 C22 12 18 4 5 2 M17 25 C18 12 12 8 3 9" fill="none" stroke="#6b5a22" strokeWidth="1.8" />
    <path d="M84 66 L94 95 L78 82Z" fill="#3b3011" />
    <path d="M18 68 L15 78 M27 72 L20 84 M50 78 L56 88 L66 94 M80 78 L76 94" fill="none" stroke="#2c230b" strokeWidth="3" strokeLinecap="round" />
    <path d="M30 28 C48 22 80 32 88 50 C93 68 88 80 74 83 C50 86 30 78 24 66Z" fill="#f0d93a" />
    <path d="M50 29 L63 34 C62 50 54 68 44 77 L34 73 C44 62 52 48 50 29Z M74 39 L84 46 C86 60 80 76 72 84 L60 83 C70 74 76 58 74 39Z" fill="#231b06" />
    <path d="M60 74 C74 66 84 70 86 78 L78 82 C72 76 66 78 60 79Z" fill="#4a3b12" />
    <path d="M2 44 C2 30 12 25 24 27 C34 30 35 48 30 56 C24 64 6 60 3 52Z" fill="#4d3d15" />
    <path d="M28 28 C34 30 36 48 30 56 L25 60 C30 48 30 38 28 28Z" fill="#857028" />
    <ellipse cx="15" cy="42" rx="6.5" ry="9.5" fill="#16181c" stroke="#77695d" />
    <circle cx="15" cy="36" r="1.8" fill="#fff" />
    <path d="M32 28 C42 10 76 -4 92 2 C97 16 90 33 78 35 C60 35 44 32 36 32Z" fill="#c9c2b6" opacity="0.92" />
    <path d="M38 29 C56 20 78 16 92 10 M46 31 C62 28 80 26 88 22" fill="none" stroke="#aaa190" strokeWidth="0.9" />
  </>
);

const Kiss = () => (
  <Face x={46.8}>
    <Stroke d="M19 36 Q24 26 33 25.5 M56.5 34.5 Q66 32 74 38.5" w={2.6} />
    <ellipse cx="34.3" cy="44.7" rx="4.8" ry="7" fill="#86531a" stroke={DARK} />
    <path d="M52.5 48.5 Q54 44 61 44 Q68 44 69 48.5 Q61 46.5 52.5 48.5Z" fill={BROWN} stroke={BROWN} strokeLinejoin="round" />
    <Stroke d="M47.5 59 Q56 59.5 57.5 63 Q55 65.5 50 67.5 Q58 68 58.5 72 Q56 77 48 78.5" w={2.4} />
    <path d="M74 81 C70 76 64 68 65 61 C67 54 76 54 79.5 61 C83 56 93 56 94 63 C93 72 82 77 74 81Z" fill="url(#heartRed)" />
    <path d="M68 61 C70 57 74 57 76 60" stroke="#f59a92" strokeWidth="1.5" fill="none" />
  </Face>
);

const BlackCircle = () => (
  <>
    <circle cx="48" cy="48" r="47.8" fill="#111" />
    <circle cx="48" cy="48" r="45" fill="#000" />
    <ellipse cx="48" cy="45" rx="41" ry="39" fill="url(#blackBall)" />
  </>
);

const Fire = () => (
  <>
    <path d="M46 .5 C56 10 72 16 72 34 C72 44 78 50 80 41 C88 52 87 68 81 80 C79 84 82 82 78 86 C66 96 34 98 20 86 C18 84 16 82 18 81 C10 72 10 56 19 41 C18 50 24 56 29 51 C36 44 28 34 38 24 C46 16 46 8 46 .5Z" fill="url(#flameOuter)" />
    <path d="M16 38 C15 30 18 24 24 22 C24 30 20 34 16 38Z" fill="#ea5a35" />
    <path d="M49 9 C56 18 64 24 64 36 C64 50 72 58 77 54 C80 66 76 82 64 90 C50 96 32 94 24 86 C14 76 18 64 20 58 C26 66 34 62 34 52 C36 44 34 36 42 26 C46 20 49 16 49 9Z" fill="url(#flameMid)" />
    <path d="M48 48 C52 58 60 62 60 70 C66 68 68 68 67 72 C68 84 60 94 48 94.5 C36 94 26 84 30 68 C34 72 38 70 38 66 C38 58 46 56 48 48Z" fill="url(#flameCore)" />
  </>
);

const drops: [number, number][] = [[9, 70], [24, 64], [29, 76], [61, 76], [76, 63], [82, 75]];

const Storm = () => (
  <>
    <path d="M20 61 C8 61 2 53 2.5 43 C3 34 10 29 18 28 C20 18 28 13 36 15 C42 7 52 4 60 7 C70 9 75 18 76 26 C87 26 94 33 94.5 43 C95 53 88 61 78 61 Z" fill="url(#cloud)" stroke="#cfd8e6" strokeWidth="0.8" />
    <path d="M18 28 C24 26 29 28 32 33 C40 30 48 32 52 34 C58 27 68 24 76 26" fill="none" stroke="#d2dae7" strokeWidth="1.5" />
    <path d="M49 61 L62 60 L54 69 L66 70 L38 93 L46 78 L36 77Z" fill="#fbdc4f" stroke="#e6a52e" strokeWidth="1.2" />
    {drops.map(([x, y]) => (
      <path key={x} d={`M${x + 6} ${y} C${x} ${y + 2} ${x - 5} ${y + 7} ${x - 4} ${y + 12} C${x - 1} ${y + 17} ${x + 7} ${y + 12} ${x + 6} ${y}Z`} fill="url(#tear)" stroke="#3a9bea" strokeWidth="0.7" />
    ))}
  </>
);

const Grinning = () => (
  <Face>
    <Dots ry={6} />
    <OpenMouth />
  </Face>
);

const Smiley = () => (
  <Face>
    <Dots x1={35.3} y={35} rx={4.5} ry={12} />
    <OpenMouth />
  </Face>
);

const SlightSmile = () => (
  <Face>
    <Dots x1={35} x2={61} y={39.5} rx={4.4} ry={7} />
    <path d="M30.5 62 Q48 74 65.5 62 Q48 78 30.5 62Z" fill={BROWN} stroke={BROWN} strokeWidth="1.2" strokeLinejoin="round" />
  </Face>
);

const UpsideDown = () => (
  <Face>
    <path d="M30.5 34.5 Q48 22 65.5 34.5 Q48 18.5 30.5 34.5Z" fill={BROWN} stroke={BROWN} strokeWidth="1.2" strokeLinejoin="round" />
    <Dots x1={35} x2={61} y={56.5} rx={4.4} ry={7} />
  </Face>
);

const Squint = () => (
  <Face>
    <path d="M25 30 L42 39.5 L25.5 48.5 L35.5 39.5Z M71 30 L54 39.5 L70.5 48.5 L60.5 39.5Z" fill={BROWN} stroke={BROWN} strokeWidth="1.8" strokeLinejoin="round" />
    <OpenMouth />
  </Face>
);

const LoveFace = () => (
  <Face>
    <path d="M8 83 C2 76 -2 68 1 63 C4 58 12 60 13 66 C18 62 24 66 23 71 C21 78 14 81 8 83Z" fill="url(#heartRed)" />
  </Face>
);

const PlainFace = () => <Face />;

type EmojiList = [string, React.FC][];

const frequentlyUsed: EmojiList = [
  ['thumbs up', ThumbsUp], ['joy', Joy], ['toolbox', Toolbox], ['fist', Fist], ['relaxed', Relaxed], ['hammer', Hammer],
  ['grin', Grin], ['unamused', Unamused], ['slight frown', SlightFrown], ['grimace', Grimace], ['innocent', Innocent], ['wink', Wink],
  ['golf', Golf], ['heart', Heart], ['beam', Beam], ['angry', Angry], ['relieved', Relieved], ['pray', Pray],
  ['beers', Beers], ['persevere', Persevere], ['rofl', Rofl], ['thinking', Thinking], ['castle', Castle], ['bee', Bee],
  ['kiss', Kiss], ['black circle', BlackCircle], ['blush', Blush], ['sweat', Sweat], ['fire', Fire], ['storm', Storm],
];

const smileys: EmojiList = [
  ['grinning', Grinning], ['sweat smile', Sweat], ['innocent', Innocent], ['kissing', PlainFace],
  ['smiley', Smiley], ['joy', Joy], ['slight smile', SlightSmile], ['love', LoveFace],
  ['grin', Grin], ['rofl', Rofl], ['upside down', UpsideDown], ['heart eyes', PlainFace],
  ['beam', Beam], ['relaxed', Relaxed], ['wink', Wink], ['whistle', PlainFace],
  ['squint', Squint], ['blush', Blush], ['relieved', Relieved], ['yum', PlainFace],
];

const Emoji = ({ name, glyph: Glyph, size = 96 }: { name: string; glyph: React.FC; size?: number }) => (
  <svg width={size} height={size} viewBox="0 0 96 96" role="img" aria-label={name}>
    <Glyph />
  </svg>
);

/* ---------- app strip icons ---------- */

const StoreMark = () => (
  <g fill="none" stroke="#fff" strokeWidth="7.5" strokeLinecap="round">
    <path d="M66 18.5 L47 53 M42 62 L38 68 M53.5 18.5 L57 24.5 M66 37 L82 68" />
    <path d="M32 54.7 H64 M79 54.7 H87" />
  </g>
);

const petals = ['#f09a3a', '#f7e02e', '#bfd64a', '#6cc07c', '#62a8df', '#8b82c6', '#c283bb', '#e4625c'];

const Petal = styled.rect`
  mix-blend-mode: multiply;
  opacity: 0.92;
`;

const PhotosIcon = () => (
  <svg width="119" height="89" viewBox="0 0 119 89">
    <g transform="translate(60 45)">
      {petals.map((color, i) => (
        <Petal key={color} x="-9.3" y="-30.5" width="18.6" height="28.5" rx="9.3" fill={color} transform={`rotate(${i * 45})`} />
      ))}
      <circle r="2" fill="#fff" />
    </g>
  </svg>
);

const SearchIcon = () => (
  <svg width="119" height="89" viewBox="0 0 119 89">
    <g fill="#fff">
      <path opacity="0.4" d="M46 24 L44 33 H36 C38 29 42 26 46 24Z" />
      <path opacity="0.7" d="M50 22.5 H60 L58 33 H47.5Z" />
      <path opacity="0.7" d="M64 24 Q70 27 72 33 H62Z" />
      <path opacity="0.8" d="M36 36 H44 L42 45 H35.5Z" />
      <path d="M47.5 36 H58 L55 45 H45Z" />
      <path opacity="0.45" d="M61 36 H73 Q74 41 73 45 H59Z" />
      <path opacity="0.6" d="M37 48 H42 L41 55 Q38 52 37 48Z" />
      <path opacity="0.55" d="M45 48 H55 L53 58.5 L44 57Z" />
      <path opacity="0.8" d="M58.5 48 H71.5 Q68 56 57 58.5Z" />
    </g>
    <circle cx="54.3" cy="40.5" r="22" fill="none" stroke="#fff" strokeWidth="4.2" />
    <path d="M71 57 L83 69.5" stroke="#fff" strokeWidth="6.5" strokeLinecap="round" />
  </svg>
);

const MonkeyIcon = () => (
  <svg width="119" height="89" viewBox="0 0 119 89">
    <ellipse cx="26.5" cy="42" rx="8" ry="15" fill="#8b6738" transform="rotate(-8 26.5 42)" />
    <ellipse cx="27.5" cy="42" rx="5" ry="11" fill="#f0c4bd" transform="rotate(-8 27.5 42)" />
    <ellipse cx="84.5" cy="27" rx="7" ry="14" fill="#8b6738" transform="rotate(-16 84.5 27)" />
    <ellipse cx="84" cy="28" rx="4" ry="9" fill="#f0c4bd" transform="rotate(-16 84 28)" />
    <path d="M31 42 C28 22 42 9 57 9 C74 9 84 20 88 34 C98 44 98 56 92 62 C86 76 76 80 66 79 C54 79 38 74 33 62 C30 56 31 50 31 42Z" fill="url(#monkeyFur)" />
    <path d="M39 46 C36 34 40 27 49 26 C55 25 59 27 61 31 C63 25 70 19 77 22 C86 25 90 36 88 42 C86 46 87 52 87 58 C84 70 77 79 66 79 C62 78 63 72 60 66 C58 58 58 52 54 51 C48 52 41 52 39 46Z" fill="url(#monkeySkin)" />
    <path d="M64 60 C66 55 77 54 83 51 C85 56 83 67 77 70 C70 73 64 70 64 60Z" fill="#5a2325" stroke="#3a1416" strokeWidth="1" />
    <path d="M67 68 C70 63 77 62 80 65 C78 70 71 72 67 68Z" fill="#9a5350" />
    <ellipse cx="52.5" cy="42.5" rx="4.3" ry="7" fill="#17181a" transform="rotate(-8 52.5 42.5)" />
    <ellipse cx="75" cy="35.5" rx="4.3" ry="6.8" fill="#17181a" transform="rotate(-14 75 35.5)" />
    <circle cx="54" cy="39" r="1.4" fill="#fff" />
    <circle cx="76" cy="32" r="1.4" fill="#fff" />
    <circle cx="66.5" cy="46.5" r="1.8" fill="#5f3e23" />
    <circle cx="71" cy="45" r="1.8" fill="#5f3e23" />
  </svg>
);

const TouchIcon = () => (
  <svg width="119" height="89" viewBox="0 0 119 89">
    <defs>
      <clipPath id="touchHeart">
        <path d="M60 75 C50 68 30 55 30 39 C30 21 52 16 60 27 C68 16 90 21 90 39 C90 55 70 68 60 75Z" />
      </clipPath>
    </defs>
    <g clipPath="url(#touchHeart)">
      <rect width="119" height="89" fill="#ea436b" />
      <path d="M66 41 L90 68 M58.5 53.5 L80 78" stroke="#b92e50" strokeWidth="14" strokeLinecap="round" opacity="0.5" />
      <path d="M66 41 L90 68 M58.5 53.5 L80 78" stroke="#fff" strokeWidth="11" strokeLinecap="round" />
      <ellipse cx="66" cy="42" rx="4" ry="4.8" fill="#f19bb3" />
      <ellipse cx="58.5" cy="54.5" rx="4" ry="4.8" fill="#f19bb3" />
    </g>
  </svg>
);

const MusicIcon = () => (
  <svg width="119" height="89" viewBox="0 0 119 89">
    <path
      d="M46.3 23 Q46.3 21 48.5 20.5 L77.5 15 Q79.6 14.6 79.6 17 V60 C79.6 66 76 68.5 70 68.5 C65 68.5 63 65.5 63 62.5 C63 58 66 56 70 55 C74 54.2 76 54 76 50 V31.5 Q76 29.5 74 29.8 L51.5 33.8 Q49.5 34.2 49.5 36 V66 C49.5 72 46 74.7 40 74.7 C35 74.7 32.6 71.5 32.6 68.5 C32.6 64 36 62 40 61 C44 60.2 46.3 60 46.3 56Z"
      fill="url(#music)"
    />
  </svg>
);

const ScaleIcon = () => (
  <svg width="119" height="89" viewBox="0 0 119 89">
    <rect x="27.7" y="12" width="65" height="66" rx="11" fill="#d4dce8" />
    <path d="M27.7 66 V67 Q27.7 78 39 78 H81 Q92.7 78 92.7 67 V66Z" fill="#a9b4c3" />
    <path d="M30 24 Q30 15 41 15 H43.5 V24 C44 38 77 38 77.5 24 V15 H80 Q90.5 15 90.5 24 V67 Q90.5 76 81 76 H40 Q30 76 30 67Z" fill="url(#scaleBody)" />
    <ellipse cx="60.3" cy="24.5" rx="14.5" ry="9.8" fill="#fbf6ee" stroke="#c2c8cf" strokeWidth="0.8" />
    <path d="M48 22 L50 23 M50.5 18.5 L52 20 M55 16 L56 18 M65.5 16 L64.5 18 M70 18.5 L68.5 20 M72.5 22 L70.5 23" stroke="#555" strokeWidth="0.9" />
    <path d="M60.3 15 V34" stroke="#d5474a" strokeWidth="2" />
  </svg>
);

/* ---------- category icons ---------- */

const Svg48 = ({ children }: { children: React.ReactNode }) => (
  <svg width="48" height="48" viewBox="0 0 48 48" fill="none" stroke="currentColor" strokeWidth="2.8">
    {children}
  </svg>
);

const ClockIcon = () => (
  <Svg48>
    <circle cx="24" cy="24" r="22.5" />
    <path d="M24 6 V24.8 H12" />
  </Svg48>
);

const SmileIcon = () => (
  <Svg48>
    <circle cx="24" cy="24" r="22.7" strokeWidth="2.6" />
    <g fill="currentColor" stroke="none">
      <ellipse cx="16.8" cy="18.2" rx="2.3" ry="3" />
      <ellipse cx="31" cy="18.2" rx="2.3" ry="3" />
      <path fillRule="evenodd" d="M9 26.5 Q24 30 39 26.5 Q38.5 42.5 24 42.5 Q9.5 42.5 9 26.5Z M12 30.3 Q12.5 33.5 14 34.5 Q24 38.5 34 34.5 Q35.5 33.5 36 30.3 Q24 32.8 12 30.3Z" />
    </g>
  </Svg48>
);

const BearIcon = () => (
  <Svg48>
    <path d="M4.5 19 C-1 11 1 1.2 10 1.2 C14 1.2 17 3.5 18.5 6 M43.5 19 C49 11 47 1.2 38 1.2 C34 1.2 31 3.5 29.5 6" strokeWidth="2.6" />
    <path d="M24 5.8 C14 5.8 9 12 7 19 C4 22 1.2 25 1.2 30 C1.2 38 7 42 14 41.5 C16 45 20 46.8 24 46.8 C28 46.8 32 45 34 41.5 C41 42 46.8 38 46.8 30 C46.8 25 44 22 41 19 C39 12 34 5.8 24 5.8Z" strokeWidth="2.6" />
    <path d="M24 36 V40 M18.5 39.5 Q20 41.5 24 40.5 Q28 41.5 29.5 39.5" strokeWidth="1.6" />
    <g fill="currentColor" stroke="none">
      <ellipse cx="14.7" cy="25" rx="2.2" ry="3" />
      <ellipse cx="33" cy="25" rx="2.2" ry="3" />
      <path d="M19.5 32.5 Q19.5 31 21 31 H27 Q28.5 31 28.5 32.5 Q27 36.5 24 36.8 Q21 36.5 19.5 32.5Z" />
    </g>
  </Svg48>
);

const FoodIcon = () => (
  <Svg48>
    <path d="M24 21 L24.5 12.2 H1.3 L4.8 46.5 H45 Q47 46 46.5 42 M18.5 12 L21 1.5 L31 5" strokeWidth="2.6" />
    <path d="M9 27 C9 23 17 21 27.5 21 C38 21 46.5 23 46.5 27 C46.5 31 42 31.5 40 31.5 H15 C11 31.5 9 30 9 27Z" strokeWidth="2.6" />
    <path d="M8.500 33 H20 L28 38 L36 33 H47 Q49 35 47 38.5 Q46 41 44 41 H12 Q8 40 8.5 33Z" fill="currentColor" stroke="none" />
    <path d="M10 42 Q9 45 10 46.5 H45.5 Q47 44 45.5 42" strokeWidth="2.2" />
  </Svg48>
);

const BallIcon = () => (
  <Svg48>
    <circle cx="24" cy="24" r="22.8" strokeWidth="2.2" />
    <g fill="currentColor" stroke="none">
      <path d="M10 11 L19 9 L20 16 L14 22 L6 19Z" />
      <path d="M27 3 L36 5 L41 12 L34 9 L28 6Z" />
      <path d="M27 26 L34 19 L40 26 L37 33 L30 34Z" />
      <path d="M9 31 L16 33 L21 37 L19 44 L10 40Z" />
      <path d="M30 45 L38 41 L35 45Z M2 18 L5 20 L2 26Z" />
    </g>
    <path d="M19 10 L28 5.5 M20 16 L27 20 L34 19 V8 M14 22 L12 31 M20 37 L27 33 M40 26 L47 24.5 M37 33 L35 42 M19 43 L30 45.5 L38 41" strokeWidth="1.6" />
  </Svg48>
);

const CityIcon = () => (
  <Svg48>
    <path d="M1.3 45 V19.3 H11.3 V1.3 H29.5 V18 M30 13.3 H46.7 V45" strokeWidth="2.6" />
    <g fill="currentColor" stroke="none">
      <path d="M15.5 6 h3.3 v3.3 h-3.3z M22 6 h3.3 v3.3 h-3.3z M15.5 12 h3.3 v3.3 h-3.3z M22 12 h3.3 v3.3 h-3.3z M39 18 h3.3 v3.3 h-3.3z M39 24 h3.3 v3.3 h-3.3z M6 24 h3.3 v3.3 h-3.3z" />
      <path d="M9 43 h5.8 v5 h-5.8z M33 43 h5.8 v5 h-5.8z" />
      <path fillRule="evenodd" d="M12 31 C13 23 16 20 24 20 C32 20 35 23 36 31 L40 33 Q41 34 41 37 V44 H7 V37 Q7 34 8 33Z M14.5 31.5 H33.5 C33 25 31 22.5 24 22.5 C17 22.5 15 25 14.5 31.5Z M9.5 40.5 H17 V39 H31 V40.5 H38.5 V42 H9.5Z" />
    </g>
    <circle cx="12.3" cy="36" r="2.5" fill="#ebecf0" stroke="none" />
    <circle cx="35.5" cy="36" r="2.5" fill="#ebecf0" stroke="none" />
  </Svg48>
);

const BulbIcon = () => (
  <Svg48>
    <path d="M24 1.2 C14 1.2 8.2 8 8.2 17 C8.2 28 17.5 26 18 40 V44 Q18.5 46.8 21 46.8 H27 Q29.5 46.8 30 44 V40 C30.5 26 39.8 28 39.8 17 C39.8 8 34 1.2 24 1.2Z M18 37.3 H30 M20 42.3 H25" strokeWidth="2.6" />
    <path d="M24 34 V28 L19.5 23.5 M24 28 L28.5 23.5" strokeWidth="1.8" />
    <circle cx="19.8" cy="23" r="1.8" fill="currentColor" stroke="none" />
    <circle cx="28.3" cy="23" r="1.8" fill="currentColor" stroke="none" />
  </Svg48>
);

const SymbolText = styled.text`
  font-family: Inter, "Liberation Sans", sans-serif;
  font-size: 28px;
  font-weight: 500;
  fill: currentColor;
  stroke: none;
`;

const SymbolsIcon = () => (
  <Svg48>
    <path d="M2 3.5 H23 M2 9.5 H23 M12.5 10 V23" strokeWidth="3" />
    <path d="M35.5 19 V1 C36 6 43 7 42.5 15" strokeWidth="2.4" />
    <ellipse cx="31.3" cy="19" rx="5.3" ry="4" fill="currentColor" stroke="none" />
    <SymbolText x="2" y="47.5" textLength="45" lengthAdjust="spacingAndGlyphs">&amp;%</SymbolText>
  </Svg48>
);

const FlagIcon = () => (
  <Svg48>
    <path d="M8.5 4 V46 M8.5 5 C12 9 18 10 24 7 C30 3 35 3 39.5 6.5 V28 C35 25 30 25 24 28 C18 31 12 30 8.5 27" strokeWidth="2.7" />
  </Svg48>
);

const categories: React.FC[] = [ClockIcon, SmileIcon, BearIcon, FoodIcon, BallIcon, CityIcon, BulbIcon, SymbolsIcon, FlagIcon];

const messageLines: [string, number][] = [
  ['Hi Jeff, played yesterday and shot', -0.64],
  ['an 83 , not bad and I easily threw', -0.54],
  ['away a few shots thanks to the', -0.64],
  ['driver. The irons were much better', -0.54],
  ['since we practiced them and it', -0.52],
  ['seems easier to ground the club', -0.51],
  ['and square it off . The driver has a', -0.58],
  ['different shape to the head and for', -0.43],
  ['some reason I’m inconsistent with', -0.49],
  ['this club now. Looking forward to', -0.66],
  ['Tuesday to workout these kinks and', -0.64],
  ['get into the 70’s', -0.2],
];

const App: React.FC = () => (
  <>
    <GlobalStyle />
    <Screen>
      <Gradients />
      <Header>
        <StatusBar>
          <StatusGroup $gap={11}>
            <Time>4:25</Time>
            <svg width="34" height="34" viewBox="0 0 32 32">
              <path d="M29.5 2.5 L3 14.5 L16 16 L17.5 29.5Z" fill="none" stroke="#000" strokeWidth="3.4" strokeLinejoin="round" />
            </svg>
          </StatusGroup>
          <StatusGroup $gap={15}>
            <svg width="55" height="35" viewBox="0 0 55 35">
              <rect x="0" y="22" width="9.5" height="13" rx="2.5" />
              <rect x="15" y="16" width="9.5" height="19" rx="2.5" />
              <rect x="30" y="8" width="9.5" height="27" rx="2.5" />
              <rect x="45" y="0" width="9.5" height="35" rx="2.5" fill="#c5c5c6" />
            </svg>
            <Carrier>LTE</Carrier>
            <svg width="79" height="37" viewBox="0 0 79 37">
              <rect x="1.5" y="1.5" width="69" height="34" rx="10" fill="none" stroke="#98989a" strokeWidth="3" />
              <rect x="6" y="6" width="32" height="25" rx="5.5" />
              <path d="M74.5 12 Q78.5 14 78.5 18.5 Q78.5 23 74.5 25Z" fill="#98989a" />
            </svg>
          </StatusGroup>
        </StatusBar>
        <NavRow>
          <BackButton>
            <svg width="36" height="64" viewBox="0 0 36 64">
              <path d="M32 4 L5 32 L32 60" fill="none" stroke="#3478f6" strokeWidth="8" strokeLinecap="round" strokeLinejoin="round" />
            </svg>
            <UnreadBadge>372</UnreadBadge>
          </BackButton>
          <Contact>
            <Avatar>JP</Avatar>
            <ContactName>
              J Peters
              <svg width="16" height="24" viewBox="0 0 16 24">
                <path d="M3 2.5 L12.5 12 L3 21.5" fill="none" stroke="#8a909b" strokeWidth="3.6" strokeLinecap="round" strokeLinejoin="round" />
              </svg>
            </ContactName>
          </Contact>
        </NavRow>
      </Header>

      <Conversation>
        <Timestamp $top={1} $spacing={0.45}>
          <b>Today</b> 11:41 AM
        </Timestamp>
        <Bubble>
          <BubbleTail width="80" height="60" viewBox="0 0 80 60">
            <path d="M17 0 V34 C17 47 11 55 0 59 C14 61 27 58 38 48 L46 40 V0Z" fill="#e5e5ea" />
            <path d="M0 60 C14 61 27 58 38.5 48 C46 56 58 60 73 60Z" fill="#fff" />
          </BubbleTail>
          {messageLines.map(([text, spacing]) => (
            <Line key={text} $spacing={spacing}>{text}</Line>
          ))}
        </Bubble>
        <Timestamp $top={54} $spacing={0.15}>
          <b>Today</b> 4:25 PM
        </Timestamp>
        <BigEmoji>
          <Emoji name="thumbs up" glyph={ThumbsUp} size={144} />
        </BigEmoji>
      </Conversation>

      <Composer>
        <ComposerIcon $right={64}>
          <svg width="96" height="72" viewBox="0 0 96 72">
            <path d="M11 12 H24 Q27 11 28.5 6 Q30.5 0 36 0 H60 Q65 0 67 6 Q69 11 72 12 H85 Q96 12 96 22 V62 Q96 72 86 72 H10 Q0 72 0 62 V22 Q0 12 11 12Z" fill="#868c98" />
            <path d="M9 9 V7 Q9 5 11 5 H17 Q19 5 19 7 V9Z" fill="#868c98" />
            <circle cx="48" cy="42" r="20" fill="none" stroke="#fff" strokeWidth="5" />
            <circle cx="76.5" cy="20.5" r="2.6" fill="#fff" />
          </svg>
        </ComposerIcon>
        <ComposerIcon $right={53}>
          <svg width="105" height="78" viewBox="0 0 105 78">
            <rect width="93.5" height="78" rx="43" ry="39" fill="#868c98" />
            <path d="M79 2 C96 8 105 22 105 39 C105 56 96 70 79 76 C92 66 99 54 99 39 C99 24 92 12 79 2Z" fill="#868c98" />
            <g transform="translate(-5.5 -0.5) scale(0.873)">
              <StoreMark />
            </g>
          </svg>
        </ComposerIcon>
        <Field>
          <Caret />
          <Placeholder>iMessage</Placeholder>
          <svg width="78" height="78" viewBox="0 0 78 78">
            <circle cx="39" cy="39" r="39" fill="#868c98" />
            <rect x="30.5" y="12" width="17" height="37" rx="8.5" fill="#fff" />
            <path d="M25 31 V40 Q25 53.5 39 53.5 Q53 53.5 53 40 V31 M39 54 V64 M28.5 64.5 H49.5" fill="none" stroke="#fff" strokeWidth="3" />
          </svg>
        </Field>
      </Composer>

      <Keyboard>
        <AppStrip>
          <AppPill><PhotosIcon /></AppPill>
          <AppPill $bg="linear-gradient(#62cbf9, #3766ea)">
            <svg width="119" height="89" viewBox="0 0 119 89">
              <StoreMark />
            </svg>
          </AppPill>
          <AppPill $bg="#e9445a"><SearchIcon /></AppPill>
          <AppPill><MonkeyIcon /></AppPill>
          <AppPill $bg="#000"><TouchIcon /></AppPill>
          <AppPill><MusicIcon /></AppPill>
          <StripDivider />
          <AppPill><ScaleIcon /></AppPill>
          <AppPill>
            <svg width="119" height="89" viewBox="0 0 119 89">
              <path d="M20.5 45 L34 31 H60 V46 H21Z" fill="#f6c945" />
            </svg>
          </AppPill>
        </AppStrip>

        <EmojiPages>
          <div>
            <SectionTitle>FREQUENTLY USED</SectionTitle>
            <EmojiGrid $columns={6}>
              {frequentlyUsed.map(([name, glyph]) => (
                <Emoji key={name} name={name} glyph={glyph} />
              ))}
            </EmojiGrid>
          </div>
          <div>
            <SectionTitle>SMILEYS &amp; PEOPLE</SectionTitle>
            <EmojiGrid $columns={4}>
              {smileys.map(([name, glyph]) => (
                <Emoji key={name} name={name} glyph={glyph} />
              ))}
            </EmojiGrid>
          </div>
        </EmojiPages>

        <CategoryBar>
          <Categories>
            {categories.map((Icon, i) => (
              <Category key={i} $active={i === 0}>
                <Icon />
              </Category>
            ))}
          </Categories>
          <svg width="68" height="50" viewBox="0 0 68 50">
            <path d="M25 2 H57 Q66 2 66 11 V39 Q66 48 57 48 H25 Q22.5 48 20.5 46 L3 27.5 Q1 25 3 22.5 L20.5 4 Q22.5 2 25 2Z" fill="none" stroke="#111" strokeWidth="4" />
            <path d="M31.5 15.5 L51 35 M51 15.5 L31.5 35" stroke="#111" strokeWidth="3.6" strokeLinecap="round" />
          </svg>
        </CategoryBar>

        <BottomRow>
          <AbcKey>ABC</AbcKey>
          <svg width="47" height="76" viewBox="0 0 47 76">
            <g fill="none" stroke="#55575f" strokeWidth="5" strokeLinecap="round">
              <rect x="12.5" y="2.5" width="21.5" height="49" rx="10.7" />
              <path d="M3 34 V40 Q3 59.5 23 59.5 Q43.5 59.5 43.5 40 V34 M23 60 V71 M11 72.5 H35" />
            </g>
          </svg>
        </BottomRow>
        <HomeIndicator />
      </Keyboard>
    </Screen>
  </>
);

export default App;
